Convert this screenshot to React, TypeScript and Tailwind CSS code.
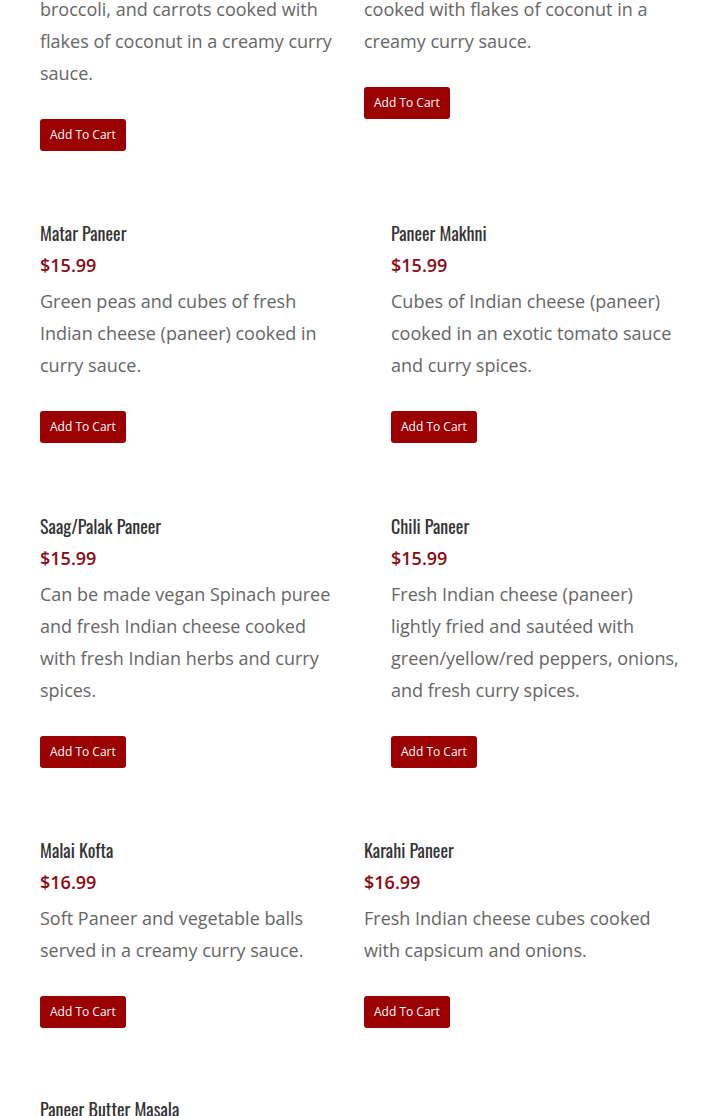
import React from "react";

type Item = {
  name?: string;
  price?: string;
  desc: string;
  indent?: boolean;
};

const rows: Item[][] = [
  [
    { desc: "broccoli, and carrots cooked with flakes of coconut in a creamy curry sauce." },
    { desc: "cooked with flakes of coconut in a creamy curry sauce." },
  ],
  [
    {
      name: "Matar Paneer",
      price: "$15.99",
      desc: "Green peas and cubes of fresh Indian cheese (paneer) cooked in curry sauce.",
    },
    {
      name: "Paneer Makhni",
      price: "$15.99",
      desc: "Cubes of Indian cheese (paneer) cooked in an exotic tomato sauce and curry spices.",
      indent: true,
    },
  ],
  [
    {
      name: "Saag/Palak Paneer",
      price: "$15.99",
      desc: "Can be made vegan Spinach puree and fresh Indian cheese cooked with fresh Indian herbs and curry spices.",
    },
    {
      name: "Chili Paneer",
      price: "$15.99",
      desc: "Fresh Indian cheese (paneer) lightly fried and sautéed with green/yellow/red peppers, onions, and fresh curry spices.",
      indent: true,
    },
  ],
  [
    {
      name: "Malai Kofta",
      price: "$16.99",
      desc: "Soft Paneer and vegetable balls served in a creamy curry sauce.",
    },
    {
      name: "Karahi Paneer",
      price: "$16.99",
      desc: "Fresh Indian cheese cubes cooked with capsicum and onions.",
    },
  ],
];

const titleClass =
  "h-[32px] leading-[32px] text-[18px] text-[#333] font-['Oswald','Liberation_Sans_Narrow','DejaVu_Sans_Condensed',sans-serif]";

function MenuItem({ item }: { item: Item }) {
  return (
    <div className={item.indent ? "pl-[27px] pr-[6px]" : ""}>
      {item.name && <h3 className={titleClass}>{item.name}</h3>}
      {item.price && (
        <p className="leading-[32px] text-[18px] font-semibold text-[#8b0a12]">
          {item.price}
        </p>
      )}
      <p className={`${item.name ? "mt-[4px]" : ""} leading-[32px] text-[18px] text-[#666]`}>
        {item.desc}
      </p>
      <button className="mt-[30px] h-[32px] px-[10px] rounded-[3px] bg-[#9a0000] text-white text-[12px]">
        Add To Cart
      </button>
    </div>
  );
}

export default function App() {
  return (
    <div className="min-h-[1116px] bg-white pl-[40px] font-['Open_Sans',sans-serif] overflow-hidden">
      <div className="mt-[-7px] flex flex-col">
        {rows.map((row, i) => (
          <div
            key={i}
            className={`grid grid-cols-[304px_324px] gap-x-[20px] items-start ${
              i === 0 ? "" : i === 2 ? "mt-[67px]" : "mt-[66px]"
            }`}
          >
            {row.map((item, j) => (
              <MenuItem key={j} item={item} />
            ))}
          </div>
        ))}
        <div className="mt-[65px]">
          <h3 className={titleClass}>Paneer Butter Masala</h3>
        </div>
      </div>
    </div>
  );
}
